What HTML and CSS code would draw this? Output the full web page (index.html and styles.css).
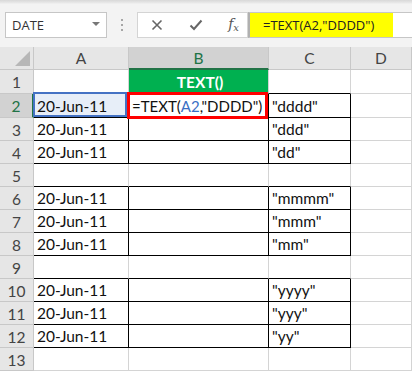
FILE: index.html
```html
<!DOCTYPE html>
<html lang="en">
<head>
    <meta charset="UTF-8">
    <meta name="viewport" content="width=device-width, initial-scale=1.0">
    <title>TEXT function - DDDD</title>
    <link rel="stylesheet" href="styles.css">
</head>
<body>
    <div class="app">
        <div class="formula-row">
            <div class="name-box">
                <span>DATE</span>
                <span class="caret"></span>
            </div>
            <div class="grip"><i></i><i></i><i></i></div>
            <div class="fx-buttons">
                <svg width="12" height="12" viewBox="0 0 12 12"><path d="M1.5 1.5 L10.5 10.5 M10.5 1.5 L1.5 10.5" stroke="#666" stroke-width="1.6" fill="none"/></svg>
                <svg width="14" height="12" viewBox="0 0 14 12"><path d="M1.5 6.5 L5 10 L12.5 1.5" stroke="#666" stroke-width="2" fill="none"/></svg>
                <span class="fx">f<sub>x</sub></span>
            </div>
            <div class="formula-box">
                <span class="formula-text">=TEXT(A2,"DDDD")</span>
            </div>
        </div>

        <div class="sheet">
            <!-- column headers -->
            <div class="hd corner"></div>
            <div class="hd col">A</div>
            <div class="hd col sel">B</div>
            <div class="hd col">C</div>
            <div class="hd col">D</div>

            <!-- row 1 -->
            <div class="hd row">1</div>
            <div class="cell bt"></div>
            <div class="cell bt green">TEXT()</div>
            <div class="cell bt"></div>
            <div class="cell"></div>

            <!-- row 2 -->
            <div class="hd row sel">2</div>
            <div class="cell box range">20-Jun-11</div>
            <div class="cell box active">=TEXT(<span class="ref">A2</span>,"DDDD")</div>
            <div class="cell box">"dddd"</div>
            <div class="cell"></div>

            <div class="hd row">3</div>
            <div class="cell box">20-Jun-11</div>
            <div class="cell box"></div>
            <div class="cell box">"ddd"</div>
            <div class="cell"></div>

            <div class="hd row">4</div>
            <div class="cell box">20-Jun-11</div>
            <div class="cell box"></div>
            <div class="cell box">"dd"</div>
            <div class="cell"></div>

            <div class="hd row">5</div>
            <div class="cell bt"></div>
            <div class="cell bt"></div>
            <div class="cell bt"></div>
            <div class="cell"></div>

            <div class="hd row">6</div>
            <div class="cell box">20-Jun-11</div>
            <div class="cell box"></div>
            <div class="cell box">"mmmm"</div>
            <div class="cell"></div>

            <div class="hd row">7</div>
            <div class="cell box">20-Jun-11</div>
            <div class="cell box"></div>
            <div class="cell box">"mmm"</div>
            <div class="cell"></div>

            <div class="hd row">8</div>
            <div class="cell box">20-Jun-11</div>
            <div class="cell box"></div>
            <div class="cell box">"mm"</div>
            <div class="cell"></div>

            <div class="hd row">9</div>
            <div class="cell bt"></div>
            <div class="cell bt"></div>
            <div class="cell bt"></div>
            <div class="cell"></div>

            <div class="hd row">10</div>
            <div class="cell box">20-Jun-11</div>
            <div class="cell box"></div>
            <div class="cell box">"yyyy"</div>
            <div class="cell"></div>

            <div class="hd row">11</div>
            <div class="cell box">20-Jun-11</div>
            <div class="cell box"></div>
            <div class="cell box">"yyy"</div>
            <div class="cell"></div>

            <div class="hd row">12</div>
            <div class="cell box">20-Jun-11</div>
            <div class="cell box"></div>
            <div class="cell box">"yy"</div>
            <div class="cell"></div>

            <div class="hd row">13</div>
            <div class="cell"></div>
            <div class="cell"></div>
            <div class="cell"></div>
            <div class="cell"></div>
        </div>
    </div>
</body>
</html>
```

FILE: styles.css
```css
body {
    margin: 0;
    padding: 0;
    background: #ffffff;
    font-family: Lato, "Liberation Sans", sans-serif;
}
.app {
    width: 412px;
    height: 371px;
    overflow: hidden;
}

/* formula bar */
.formula-row {
    height: 47px;
    box-sizing: border-box;
    padding: 12px 0 0 5px;
    display: flex;
    align-items: flex-start;
    background: linear-gradient(#d8d8d8 0, #e9e9e9 3px, #f3f3f3 4px);
    font-family: "Open Sans", sans-serif;
}
.name-box {
    width: 102px;
    height: 26px;
    box-sizing: border-box;
    border: 1px solid #c6c6c6;
    background: white;
    display: flex;
    align-items: center;
    justify-content: space-between;
    padding: 0 6px 0 6px;
    font-size: 13px;
    color: #333;
}
.caret {
    width: 0;
    height: 0;
    border-left: 4px solid transparent;
    border-right: 4px solid transparent;
    border-top: 4px solid #777;
    margin-top: -2px;
}
.grip {
    width: 30px;
    height: 26px;
    display: flex;
    flex-direction: column;
    align-items: center;
    justify-content: center;
    gap: 3px;
}
.grip i {
    width: 2px;
    height: 2px;
    background: #a6a6a6;
}
.fx-buttons {
    width: 111px;
    height: 26px;
    box-sizing: border-box;
    border: 1px solid #d4d4d4;
    background: white;
    display: flex;
    align-items: center;
    justify-content: space-between;
    padding: 0 8px 0 13px;
}
.fx {
    font-family: "DejaVu Serif", serif;
    font-style: italic;
    font-size: 14px;
    color: #555;
    line-height: 1;
}
.fx sub {
    font-size: 10px;
    vertical-align: -2px;
}
.formula-box {
    flex: 1;
    height: 26px;
    box-sizing: border-box;
    border: 1px solid #c6c6c6;
    border-left: 2px solid #b0b0b0;
    border-right: none;
    background: linear-gradient(90deg, #ffff00 143px, #ffffff 143px);
    display: flex;
    align-items: center;
    padding-left: 13px;
}
.formula-text {
    font-size: 13px;
    color: #222;
}

/* grid */
.sheet {
    display: grid;
    grid-template-columns: 34px 95px 140px 82px 61px;
    grid-template-rows: 23px 24px 24px repeat(11, 23px);
}
.sheet > div {
    box-sizing: border-box;
    border-right: 1px solid #d4d4d4;
    border-bottom: 1px solid #d4d4d4;
}
.hd {
    background: #e6e6e6;
    color: #444;
    font-size: 15.5px;
    display: flex;
    align-items: center;
    justify-content: center;
}
.sheet > .hd {
    border-color: #c8c8c8;
}
.hd.row {
    padding-top: 1px;
}
.corner {
    position: relative;
}
.corner::after {
    content: "";
    position: absolute;
    right: 3px;
    bottom: 3px;
    border-left: 15px solid transparent;
    border-bottom: 15px solid #b7b7b7;
}
.sheet > .hd.col.sel {
    background: #d2d2d2;
    color: #217346;
    border-bottom: 2px solid #217346;
}
.sheet > .hd.row.sel {
    background: #d2d2d2;
    color: #217346;
    border-right: 2px solid #217346;
}

.cell {
    font-size: 15.5px;
    color: #111;
    display: flex;
    align-items: flex-end;
    padding: 0 0 2px 3px;
    white-space: nowrap;
}
.sheet > .bt {
    border-bottom-color: #000;
}
.sheet > .box {
    border-right-color: #000;
    border-bottom-color: #000;
}
.green {
    background: #00b050;
    color: white;
    font-weight: bold;
    justify-content: center;
}
.ref {
    color: #3a6fc4;
}
.range {
    position: relative;
    background: #e7eef8;
}
.range::after {
    content: "";
    position: absolute;
    left: -1px;
    top: -2px;
    right: 1px;
    bottom: 0;
    border: 2px solid #4472c4;
}
.active {
    position: relative;
    font-size: 15px;
    padding-left: 3px;
}
.active::after {
    content: "";
    position: absolute;
    left: -2px;
    top: -2px;
    right: 0;
    bottom: -2px;
    border: 3px solid #ff0000;
}
```
